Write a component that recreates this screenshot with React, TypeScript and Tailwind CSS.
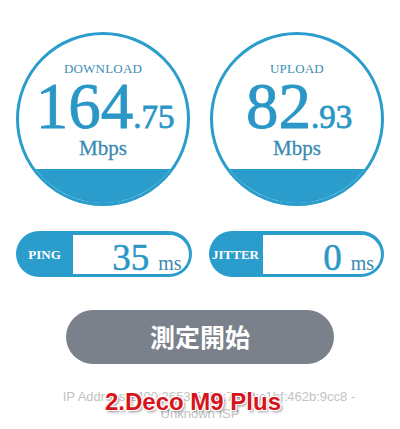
import React from "react";

const SERIF = { fontFamily: '"Liberation Serif", "DejaVu Serif", serif' };
const HEAVY = { WebkitTextStroke: "0.8px currentColor" } as React.CSSProperties;

function Gauge({ label, whole, frac }: { label: string; whole: string; frac: string }) {
  return (
    <div className="w-[174px] h-[174px] rounded-full border-[3px] border-[#2b9dcc] overflow-hidden flex flex-col bg-white">
      <div className="flex-1 flex flex-col items-center pt-[27px]" style={SERIF}>
        <div className="text-[13px] leading-none text-[#3d8db5] tracking-[0.2px]">{label}</div>
        <div className="flex items-baseline text-[#2a97c6] mt-[7px] ml-[4px]" style={HEAVY}>
          <span className="text-[65px] leading-[48px]">{whole}</span>
          <span className="text-[33px] leading-[24px]">.{frac}</span>
        </div>
        <div className="text-[21px] leading-none text-[#3b89b2] mt-[8px]" style={{ WebkitTextStroke: "0.3px currentColor" }}>
          Mbps
        </div>
      </div>
      <div className="h-[34px] bg-[#2b9dcc]" />
    </div>
  );
}

function Pill({ label, value, labelW }: { label: string; value: string; labelW: string }) {
  return (
    <div className="h-[46px] rounded-full bg-[#2b9dcc] flex pt-[4px] pb-[3px] pr-[3px]" style={SERIF}>
      <div className={`${labelW} flex items-center justify-center text-white font-bold text-[13px]`}>
        {label}
      </div>
      <div className="flex-1 bg-white rounded-r-full flex items-baseline justify-end pr-[7px] pt-[4px]">
        <span className="text-[37px] leading-none text-[#2a97c6]" style={{ WebkitTextStroke: "0.5px currentColor" }}>
          {value}
        </span>
        <span className="text-[20px] leading-none text-[#3b89b2] ml-[9px]">ms</span>
      </div>
    </div>
  );
}

export default function App() {
  return (
    <div className="w-[400px] h-[429px] bg-white overflow-hidden relative">
      <div className="flex gap-5 px-4 pt-[32px]">
        <Gauge label="DOWNLOAD" whole="164" frac="75" />
        <Gauge label="UPLOAD" whole="82" frac="93" />
      </div>

      <div className="grid grid-cols-2 gap-[17px] px-4 mt-[25px]">
        <Pill label="PING" value="35" labelW="w-[57px]" />
        <Pill label="JITTER" value="0" labelW="w-[54px]" />
      </div>

      <div className="flex justify-center mt-[33px]">
        <button
          className="w-[268px] h-[54px] rounded-full bg-[#7a818b] text-white text-[25px] font-bold"
          style={{ fontFamily: '"Noto Sans CJK JP", "Noto Sans", sans-serif' }}
        >
          測定開始
        </button>
      </div>

      <div
        className="mt-[24px] text-center text-[13px] leading-[17px] text-[#c2c2c2]"
        style={{ fontFamily: '"Liberation Sans", Arial, sans-serif' }}
      >
        <div className="pl-[18px]">IP Address:2400:2653:5200:7a00:c1bf:462b:9cc8 -</div>
        <div>Unknown ISP</div>
      </div>

      {/* caption over the IP line */}
      <div
        className="absolute left-0 right-0 top-[384px] text-center text-[24px] font-bold text-[#d7141c]"
        style={{
          fontFamily: '"Liberation Sans", Arial, sans-serif',
          textShadow:
            "1px 0 0 #fff, -1px 0 0 #fff, 0 1px 0 #fff, 0 -1px 0 #fff, 1px 1px 0 #fff, -1px -1px 0 #fff, 1px -1px 0 #fff, -1px 1px 0 #fff, 2px 2px 3px rgba(0,0,0,0.45)",
        }}
      >
        <span className="ml-[-14px]">2.Deco M9 Plus</span>
      </div>
    </div>
  );
}
